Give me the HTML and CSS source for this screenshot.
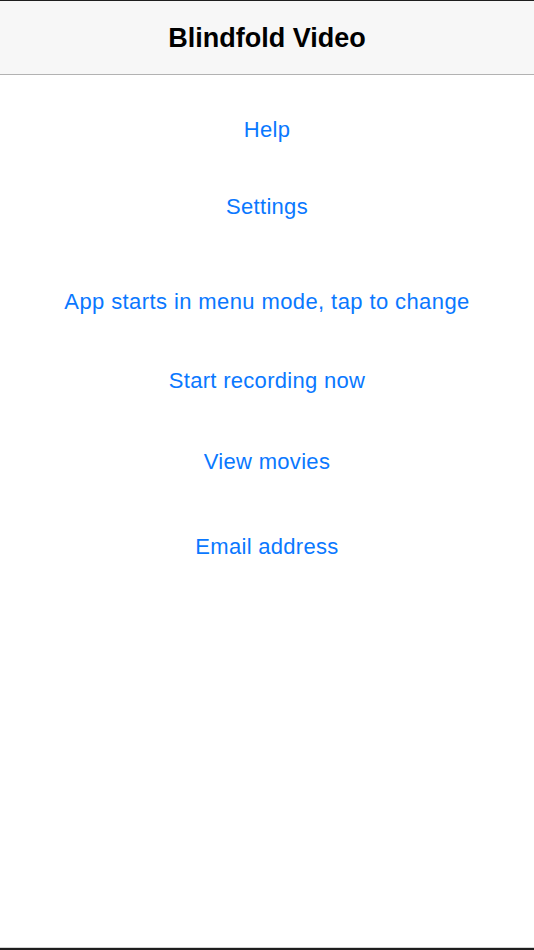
FILE: index.html
```html
<!DOCTYPE html>
<html lang="en">
<head>
<meta charset="utf-8">
<title>Blindfold Video</title>
<link rel="stylesheet" href="styles.css">
</head>
<body>
<div class="screen">
  <header class="navbar">
    <h1 class="navbar-title">Blindfold Video</h1>
  </header>
  <main class="menu">
    <a class="menu-item" href="#">Help</a>
    <a class="menu-item menu-item--settings" href="#">Settings</a>
    <a class="menu-item menu-item--mode" href="#">App starts in menu mode, tap to change</a>
    <a class="menu-item menu-item--record" href="#">Start recording now</a>
    <a class="menu-item menu-item--movies" href="#">View movies</a>
    <a class="menu-item menu-item--email" href="#">Email address</a>
  </main>
</div>
</body>
</html>
```

FILE: styles.css
```css
html, body {
  margin: 0;
  padding: 0;
  background: #ffffff;
}

.screen {
  height: 950px;
  box-sizing: border-box;
  display: flex;
  flex-direction: column;
  border-top: 1px solid #1e1e1e;
  border-bottom: 2px solid #1e1e1e;
  font-family: "Liberation Sans", Arial, sans-serif;
}

.navbar {
  flex: none;
  height: 71px;
  padding-top: 2px;
  background: #f7f7f7;
  border-bottom: 1px solid #b2b2b2;
  display: flex;
  align-items: center;
  justify-content: center;
}

.navbar-title {
  margin: 0;
  font-size: 27px;
  font-weight: 700;
  color: #000000;
  line-height: normal;
}

.menu {
  flex: 1;
  display: flex;
  flex-direction: column;
  align-items: center;
  padding-top: 42px;
  border-bottom: 1px solid #d4d4d4;
}

.menu-item {
  display: block;
  font-size: 22px;
  line-height: 26px;
  color: #0a78ff;
  text-decoration: none;
  letter-spacing: 0.3px;
}

.menu-item--settings { margin-top: 50.6px; }
.menu-item--mode { margin-top: 69px; letter-spacing: 0.4px; }
.menu-item--record { margin-top: 53px; }
.menu-item--movies { margin-top: 55px; }
.menu-item--email { margin-top: 59.7px; }
```
